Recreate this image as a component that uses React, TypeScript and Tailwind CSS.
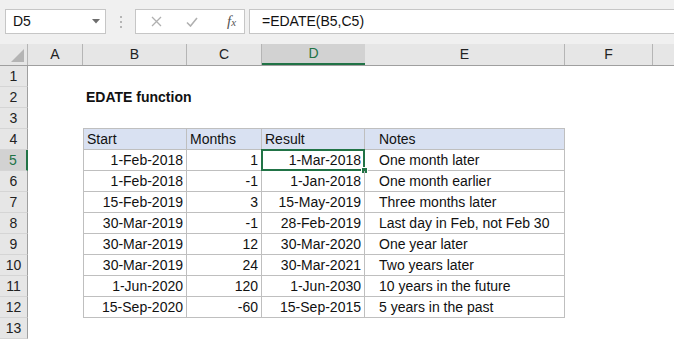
import React from "react";

const cols = [
  { key: "A", w: "w-[55px]" },
  { key: "B", w: "w-[104px]" },
  { key: "C", w: "w-[75px]" },
  { key: "D", w: "w-[103px]" },
  { key: "E", w: "w-[200px]" },
  { key: "F", w: "w-[88px]" },
  { key: "G", w: "flex-1" },
];

const data = [
  ["1-Feb-2018", "1", "1-Mar-2018", "One month later"],
  ["1-Feb-2018", "-1", "1-Jan-2018", "One month earlier"],
  ["15-Feb-2019", "3", "15-May-2019", "Three months later"],
  ["30-Mar-2019", "-1", "28-Feb-2019", "Last day in Feb, not Feb 30"],
  ["30-Mar-2019", "12", "30-Mar-2020", "One year later"],
  ["30-Mar-2019", "24", "30-Mar-2021", "Two years later"],
  ["1-Jun-2020", "120", "1-Jun-2030", "10 years in the future"],
  ["15-Sep-2020", "-60", "15-Sep-2015", "5 years in the past"],
];

const font = "font-['Liberation_Sans',Arial,sans-serif]";

function RowHead({ n }: { n: number }) {
  const sel = n === 5;
  return (
    <div
      className={`flex h-[21px] w-[28px] shrink-0 items-center justify-center border-b border-[#d5d5d5] text-[14px] ${
        sel
          ? "border-r-2 border-r-[#217346] bg-[#d2d2d2] text-[#217346]"
          : "border-r border-r-[#9f9f9f] bg-[#e6e6e6] text-[#222]"
      }`}
    >
      {n}
    </div>
  );
}

function Row({ n, children }: { n: number; children?: React.ReactNode }) {
  return (
    <div className="flex h-[21px]">
      <RowHead n={n} />
      {children}
    </div>
  );
}

export default function App() {
  return (
    <div className={`h-[339px] w-[674px] overflow-hidden bg-white text-[#111] ${font}`}>
      {/* formula bar */}
      <div className="flex h-[44px] items-start bg-[#f0f0f0] pt-[9px]">
        <div className="ml-[5px] flex h-[25px] w-[101px] items-center justify-between border border-[#c6c6c6] bg-white pl-[7px] pr-[5px] text-[14px]">
          <span>D5</span>
          <svg width="8" height="5" viewBox="0 0 8 5">
            <path d="M0 0h8L4 4.5z" fill="#6d6d6d" />
          </svg>
        </div>
        <div className="ml-[14px] mt-[7px] flex flex-col gap-[3px]">
          <span className="h-[2px] w-[2px] bg-[#b5b5b5]" />
          <span className="h-[2px] w-[2px] bg-[#b5b5b5]" />
          <span className="h-[2px] w-[2px] bg-[#b5b5b5]" />
        </div>
        <div className="ml-[13px] flex h-[25px] w-[110px] items-center border border-[#c6c6c6] bg-white">
          <svg className="ml-[15px]" width="11" height="11" viewBox="0 0 11 11">
            <path d="M1 1l9 9M10 1l-9 9" stroke="#b0b0b0" strokeWidth="1.3" />
          </svg>
          <svg className="ml-[24px]" width="12" height="10" viewBox="0 0 12 10">
            <path d="M1 5.5l3.5 3.5L11 1" stroke="#b0b0b0" strokeWidth="1.6" fill="none" />
          </svg>
          <span className="ml-[29px] font-['Liberation_Serif',serif] text-[15px] italic text-[#555]">
            f<span className="text-[11px]">x</span>
          </span>
        </div>
        <div className="ml-[4px] flex h-[25px] flex-1 items-center border-y border-l border-[#c6c6c6] bg-white pl-[12px] text-[14px]">
          =EDATE(B5,C5)
        </div>
      </div>

      {/* column headers */}
      <div className="flex h-[22px] border-b border-[#9f9f9f] bg-[#e6e6e6] text-[14px]">
        <div className="relative w-[28px] shrink-0 border-r border-[#b5b5b5]">
          <svg className="absolute bottom-[3px] right-[3px]" width="13" height="13" viewBox="0 0 13 13">
            <path d="M13 0v13H0z" fill="#b4b4b4" />
          </svg>
        </div>
        {cols.map((c) => (
          <div
            key={c.key}
            className={`flex shrink-0 items-center justify-center ${c.w} ${
              c.key === "D"
                ? "border-b-2 border-b-[#217346] bg-[#d2d2d2] text-[#217346]"
                : c.key === "G"
                ? ""
                : "border-r border-[#b5b5b5] text-[#222]"
            }`}
          >
            {c.key === "G" ? "" : c.key}
          </div>
        ))}
      </div>

      <Row n={1} />
      <Row n={2}>
        <div className="w-[55px] shrink-0" />
        <div className="flex items-center pl-[3px] text-[14px] font-bold">EDATE function</div>
      </Row>
      <Row n={3} />
      <Row n={4}>
        <div className="w-[55px] shrink-0" />
        <div className="flex h-[22px] -translate-y-px text-[14px]">
          <div className="flex w-[104px] items-center border border-[#bfbfbf] bg-[#d9e1f2] pl-[3px]">Start</div>
          <div className="flex w-[75px] items-center border-y border-r border-[#bfbfbf] bg-[#d9e1f2] pl-[3px]">Months</div>
          <div className="flex w-[103px] items-center border-y border-r border-[#bfbfbf] bg-[#d9e1f2] pl-[3px]">Result</div>
          <div className="flex w-[200px] items-center border-y border-r border-[#bfbfbf] bg-[#d9e1f2] pl-[14px]">Notes</div>
        </div>
      </Row>
      {data.map((r, i) => (
        <Row key={i} n={i + 5}>
          <div className="w-[55px] shrink-0" />
          <div className="flex text-[14px]">
            <div className="flex w-[104px] items-center justify-end border-x border-b border-[#bfbfbf] pr-[3px]">{r[0]}</div>
            <div className="flex w-[75px] items-center justify-end border-b border-r border-[#bfbfbf] pr-[3px]">{r[1]}</div>
            <div className="relative flex w-[103px] items-center justify-end border-b border-r border-[#bfbfbf] pr-[3px]">
              {i === 0 && (
                <>
                  <div className="absolute -left-px -top-px bottom-[-1px] right-[-1px] border-2 border-[#217346]" />
                  <div className="absolute bottom-[-4px] right-[-4px] h-[7px] w-[7px] border border-white bg-[#217346]" />
                </>
              )}
              {r[2]}
            </div>
            <div className="flex w-[200px] items-center border-b border-r border-[#bfbfbf] pl-[14px]">{r[3]}</div>
          </div>
        </Row>
      ))}
      <Row n={13} />
    </div>
  );
}
